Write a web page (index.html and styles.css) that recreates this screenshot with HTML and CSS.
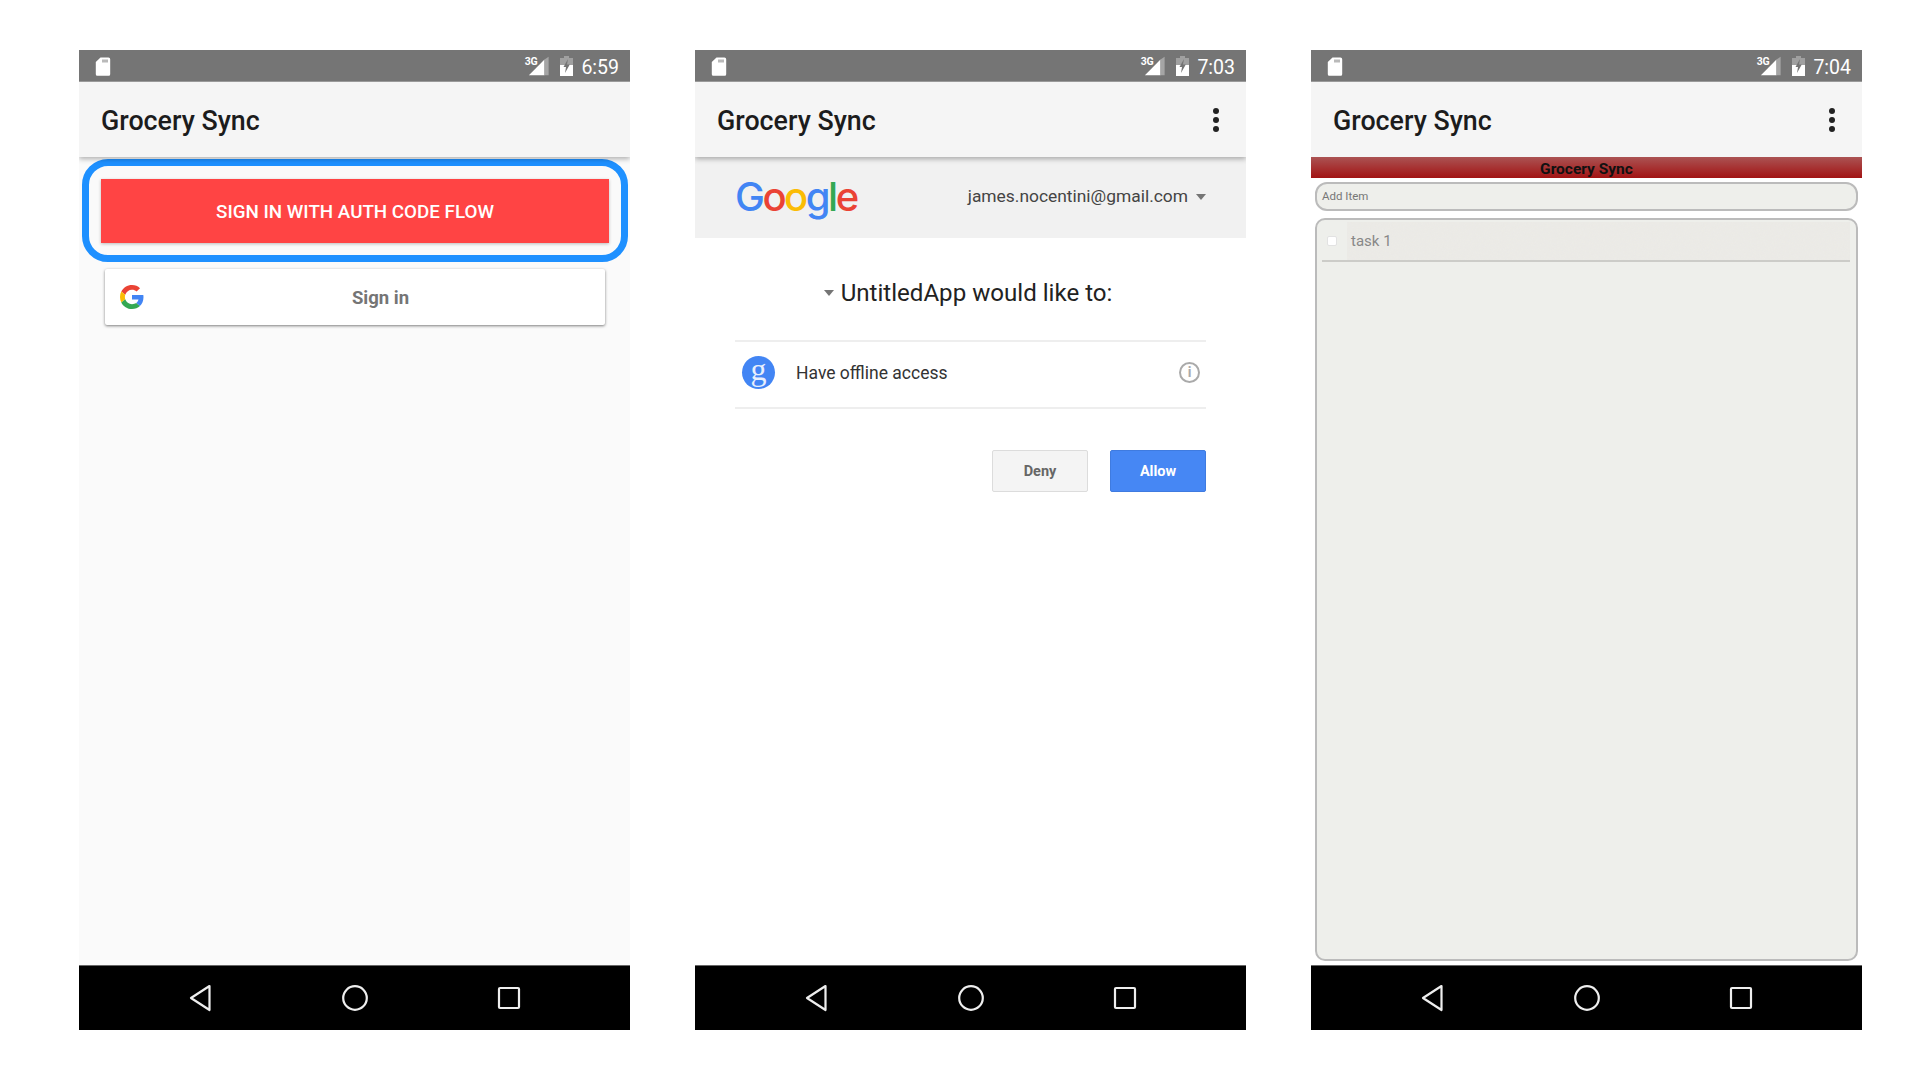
FILE: index.html
```html
<!DOCTYPE html>
<html lang="en">
<head>
  <meta charset="UTF-8" />
  <title>Grocery Sync screenshots</title>
  <link rel="stylesheet" href="styles.css">
</head>
<body>
  <svg class="defs" width="0" height="0">
    <symbol id="sd" viewBox="0 0 15 19">
      <path d="M5 0.5h8a1.7 1.7 0 0 1 1.7 1.7v15a1.5 1.500 0 0 1-1.500 1.500H1.800a1.500 1.500 0 0 1-1.500-1.500V5z" fill="#fff"/>
      <path d="M7 2.500h1v3H7zM9 2.500h1v3H9zM11 2.500h1v3h-1z" fill="#757575"/>
    </symbol>
    <symbol id="signal" viewBox="0 0 24 20">
      <path d="M1 20 L18 3 V20z" fill="#fff"/>
      <path d="M18 3 L22.500 0 V20 H18z" fill="#a5a5a5"/>
    </symbol>
    <symbol id="battery" viewBox="0 0 13 20">
      <path d="M4 0h5v2h4v18H0V2h4z" fill="#a0a0a0"/>
      <path d="M0 9h13v11H0z" fill="#fff"/>
      <path d="M8 3 3.500 11H6l-1 6 4.800-8.500H7z" fill="#757575"/>
    </symbol>
    <symbol id="back" viewBox="0 0 24 28">
      <path d="M21.500 2 3 14l18.500 12z" fill="none" stroke="#eee" stroke-width="2.200" stroke-linejoin="round"/>
    </symbol>
    <symbol id="home" viewBox="0 0 28 28">
      <circle cx="14" cy="14" r="11.800" fill="none" stroke="#eee" stroke-width="2.200"/>
    </symbol>
    <symbol id="recent" viewBox="0 0 24 24">
      <rect x="2" y="2" width="20" height="20" rx="1" fill="none" stroke="#eee" stroke-width="2.200"/>
    </symbol>
  </svg>

  <main class="gallery">

    <section class="phone">
      <div class="status-bar">
        <svg class="icon-sd"><use href="#sd"/></svg>
        <div class="status-right">
          <span class="net">3G</span>
          <svg class="icon-signal"><use href="#signal"/></svg>
          <svg class="icon-battery"><use href="#battery"/></svg>
          <span class="clock">6:59</span>
        </div>
      </div>
      <header class="app-bar">
        <h1>Grocery Sync</h1>
      </header>
      <div class="content signin">
        <div class="highlight">
          <button class="auth-btn">SIGN IN WITH AUTH CODE FLOW</button>
        </div>
        <button class="google-btn">
          <svg class="g-icon" viewBox="0 0 48 48">
            <path fill="#EA4335" d="M24 9.500c3.540 0 6.710 1.220 9.210 3.600l6.850-6.850C35.900 2.380 30.470 0 24 0 14.620 0 6.510 5.380 2.560 13.220l7.980 6.190C12.430 13.720 17.740 9.500 24 9.500z"/>
            <path fill="#4285F4" d="M46.980 24.550c0-1.570-.15-3.090-.38-4.550H24v9.020h12.940c-.58 2.960-2.260 5.480-4.780 7.180l7.730 6c4.510-4.180 7.090-10.360 7.090-17.650z"/>
            <path fill="#FBBC05" d="M10.530 28.590c-.48-1.450-.76-2.990-.76-4.590s.27-3.140.76-4.590l-7.980-6.190C.92 16.460 0 20.120 0 24c0 3.880.92 7.540 2.560 10.780l7.970-6.190z"/>
            <path fill="#34A853" d="M24 48c6.480 0 11.930-2.130 15.890-5.810l-7.730-6c-2.150 1.450-4.920 2.300-8.160 2.300-6.260 0-11.570-4.220-13.470-9.910l-7.980 6.190C6.510 42.620 14.620 48 24 48z"/>
          </svg>
          <span class="google-label">Sign in</span>
        </button>
      </div>
      <nav class="nav-bar">
        <svg class="icon-back"><use href="#back"/></svg>
        <svg class="icon-home"><use href="#home"/></svg>
        <svg class="icon-recent"><use href="#recent"/></svg>
      </nav>
    </section>

    <section class="phone">
      <div class="status-bar">
        <svg class="icon-sd"><use href="#sd"/></svg>
        <div class="status-right">
          <span class="net">3G</span>
          <svg class="icon-signal"><use href="#signal"/></svg>
          <svg class="icon-battery"><use href="#battery"/></svg>
          <span class="clock">7:03</span>
        </div>
      </div>
      <header class="app-bar">
        <h1>Grocery Sync</h1>
        <div class="overflow"><i></i><i></i><i></i></div>
      </header>
      <div class="content consent">
        <div class="account-row">
          <div class="google-word"><span class="c-blue">G</span><span class="c-red">o</span><span class="c-yellow">o</span><span class="c-blue">g</span><span class="c-green">l</span><span class="c-red">e</span></div>
          <div class="account">james.nocentini@gmail.com<span class="caret"></span></div>
        </div>
        <h2 class="consent-title"><span class="caret"></span>UntitledApp would like to:</h2>
        <div class="scope">
          <div class="scope-badge">g</div>
          <div class="scope-text">Have offline access</div>
          <div class="scope-info">i</div>
        </div>
        <div class="consent-actions">
          <button class="deny">Deny</button>
          <button class="allow">Allow</button>
        </div>
      </div>
      <nav class="nav-bar">
        <svg class="icon-back"><use href="#back"/></svg>
        <svg class="icon-home"><use href="#home"/></svg>
        <svg class="icon-recent"><use href="#recent"/></svg>
      </nav>
    </section>

    <section class="phone">
      <div class="status-bar">
        <svg class="icon-sd"><use href="#sd"/></svg>
        <div class="status-right">
          <span class="net">3G</span>
          <svg class="icon-signal"><use href="#signal"/></svg>
          <svg class="icon-battery"><use href="#battery"/></svg>
          <span class="clock">7:04</span>
        </div>
      </div>
      <header class="app-bar flat">
        <h1>Grocery Sync</h1>
        <div class="overflow"><i></i><i></i><i></i></div>
      </header>
      <div class="content tasks">
        <div class="tasks-title">Grocery Sync</div>
        <div class="add-item">Add Item</div>
        <div class="task-panel">
          <div class="task-row">
            <span class="task-check"></span>
            <span class="task-name">task 1</span>
          </div>
        </div>
      </div>
      <nav class="nav-bar">
        <svg class="icon-back"><use href="#back"/></svg>
        <svg class="icon-home"><use href="#home"/></svg>
        <svg class="icon-recent"><use href="#recent"/></svg>
      </nav>
    </section>

  </main>
</body>
</html>
```

FILE: styles.css
```css
* {
  box-sizing: border-box;
}

body {
  margin: 0;
  background-color: white;
  font-family: Roboto, "Liberation Sans", sans-serif;
}

.defs {
  position: absolute;
}

.gallery {
  display: flex;
  gap: 65px;
  padding: 50px 0 0 79px;
}

.phone {
  width: 551px;
  height: 980px;
  display: flex;
  flex-direction: column;
}

/* status bar */
.status-bar {
  height: 32px;
  background-color: #757575;
  border-bottom: 1px solid #9a9a9a;
  display: flex;
  justify-content: space-between;
  align-items: center;
  padding: 1px 11px 0 16px;
  flex: none;
}

.icon-sd {
  width: 16px;
  height: 19px;
}

.status-right {
  display: flex;
  align-items: center;
  color: white;
}

.net {
  font-size: 10.500px;
  font-weight: 700;
  margin: -10px -9px 0 0;
  letter-spacing: -0.3px;
}

.icon-signal {
  width: 22px;
  height: 20px;
  margin-right: 10px;
}

.icon-battery {
  width: 13px;
  height: 20px;
  margin-right: 8px;
}

.clock {
  font-size: 19.500px;
  margin-top: 2px;
}

/* app bar */
.app-bar {
  height: 75px;
  background-color: #f5f5f5;
  display: flex;
  justify-content: space-between;
  align-items: center;
  padding: 1px 22px 0;
  flex: none;
  position: relative;
  box-shadow: 0 2px 5px rgba(0,0,0,0.3);
  clip-path: inset(0 0 -12px 0);
}

.app-bar.flat {
  box-shadow: none;
}

.app-bar h1 {
  margin: 2px 0 0;
  font-size: 26.800px;
  font-weight: 500;
  color: #1c1c1c;
}

.overflow {
  display: flex;
  flex-direction: column;
  gap: 3px;
  margin: -1px 5px 0 0;
}

.overflow i {
  display: block;
  width: 6px;
  height: 6px;
  border-radius: 50%;
  background-color: #222;
}

.content {
  flex: 1;
  min-height: 0;
}

/* first phone */
.signin {
  background-color: #fafafa;
  padding: 2px 3px 0;
}

.highlight {
  width: 546px;
  height: 103px;
  border: 7px solid #1e90ff;
  border-radius: 26px;
  padding: 13px 12px;
}

.auth-btn {
  width: 100%;
  height: 64px;
  border: none;
  padding: 2px 0 0;
  background-color: #ff4444;
  color: white;
  font-family: inherit;
  font-size: 18.800px;
  font-weight: 500;
  box-shadow: 0 1px 3px rgba(0,0,0,0.25);
}

.google-btn {
  width: 500px;
  height: 56px;
  margin: 7px 0 0 23px;
  border: none;
  border-radius: 2px;
  background-color: white;
  box-shadow: 0 1px 3px rgba(0,0,0,0.5);
  display: flex;
  align-items: center;
  padding: 0 0 0 15px;
  font-family: inherit;
}

.g-icon {
  width: 24px;
  height: 24px;
  flex: none;
}

.google-label {
  flex: 1;
  text-align: center;
  font-size: 18.500px;
  font-weight: 700;
  color: #757575;
  padding: 2px 0 0 12px;
}

/* second phone */
.consent {
  background-color: white;
}

.account-row {
  height: 81px;
  background-color: #f1f1f1;
  display: flex;
  justify-content: space-between;
  align-items: center;
  padding: 0 40px;
}

.google-word {
  font-family: Inter, sans-serif;
  font-size: 40px;
  font-weight: 500;
  letter-spacing: -2.500px;
  line-height: 1;
  margin-top: -2px;
}

.c-blue { color: #4285f4; }
.c-red { color: #ea4335; }
.c-yellow { color: #fbbc05; }
.c-green { color: #34a853; }

.account {
  font-size: 17.400px;
  color: #444;
  display: flex;
  align-items: center;
  margin-top: -4px;
}

.caret {
  display: inline-block;
  border: 5.500px solid transparent;
  border-top: 6px solid #757575;
  border-bottom: 0;
}

.account .caret {
  margin-left: 8px;
  margin-top: 3px;
}

.consent-title {
  margin: 0;
  height: 102px;
  padding: 8px 5px 0 0;
  display: flex;
  justify-content: center;
  align-items: center;
  font-size: 24.100px;
  font-weight: 400;
  color: #222;
}

.consent-title .caret {
  margin-right: 7px;
}

.scope {
  height: 69px;
  margin: 0 40px;
  border-top: 2px solid #eee;
  border-bottom: 2px solid #eee;
  display: flex;
  align-items: center;
  padding: 0 6px 4px 7px;
}

.scope-badge {
  width: 33px;
  height: 33px;
  border-radius: 50%;
  background-color: #4285f4;
  color: #e8effc;
  font-family: "Liberation Serif", serif;
  font-size: 32px;
  line-height: 26px;
  text-align: center;
  flex: none;
}

.scope-text {
  flex: 1;
  margin-left: 21px;
  font-size: 17.500px;
  color: #333;
}

.scope-info {
  width: 21px;
  height: 21px;
  border: 2px solid #aaa;
  border-radius: 50%;
  color: #aaa;
  font-size: 14px;
  font-weight: 700;
  line-height: 17px;
  text-align: center;
}

.consent-actions {
  display: flex;
  justify-content: flex-end;
  gap: 22px;
  margin: 41px 40px 0;
}

.consent-actions button {
  width: 96px;
  height: 42px;
  border-radius: 2px;
  font-family: inherit;
  font-size: 14.500px;
  font-weight: 700;
}

.deny {
  background-color: #f4f4f4;
  border: 1px solid #dcdcdc;
  color: #666;
}

.allow {
  background-color: #4687f4;
  border: 1px solid #3f7be0;
  color: white;
}

/* third phone */
.tasks {
  background-color: white;
  padding-bottom: 4px;
  display: flex;
  flex-direction: column;
}

.tasks-title {
  height: 21px;
  flex: none;
  background: linear-gradient(#ab5353, #a21313);
  font-size: 15.500px;
  font-weight: 700;
  line-height: 24px;
  text-align: center;
  color: #111;
  margin-bottom: 4px;
  overflow: hidden;
}

.add-item {
  height: 29px;
  flex: none;
  margin: 0 4px 0;
  padding-left: 5px;
  background-color: #eeefeb;
  border: 2px solid #bbb;
  border-radius: 12px;
  font-size: 11.500px;
  line-height: 25px;
  color: #777;
}

.task-panel {
  flex: 1;
  margin: 7px 4px 0;
  padding: 2px 6px 0 5px;
  background-color: #eeefeb;
  border: 2px solid #bbb;
  border-radius: 10px;
}

.task-row {
  height: 40px;
  display: flex;
  align-items: center;
  border-bottom: 2px solid #ccccc8;
  background:
    linear-gradient(90deg, #eeefeb 25px, transparent 25px),
    url("data:image/svg+xml,%3Csvg xmlns='http://www.w3.org/2000/svg' width='200' height='60'%3E%3Cfilter id='n'%3E%3CfeTurbulence type='fractalNoise' baseFrequency='0.6' numOctaves='2'/%3E%3CfeColorMatrix values='0 0 0 0 0.75 0 0 0 0 0.74 0 0 0 0 0.7 0 0 0 0.14 0'/%3E%3C/filter%3E%3Crect width='200' height='60' filter='url(%23n)'/%3E%3C/svg%3E"),
    #ecebe7;
}

.task-check {
  width: 10px;
  height: 10px;
  margin-left: 5px;
  background-color: white;
  border: 1px solid #e2e2e2;
  border-radius: 2px;
}

.task-name {
  margin-left: 14px;
  font-size: 15px;
  color: #888;
}

/* nav bar */
.nav-bar {
  height: 65px;
  background-color: black;
  border-top: 1px solid #666;
  display: flex;
  justify-content: space-between;
  align-items: center;
  padding: 0 109px;
  flex: none;
}

.icon-back {
  width: 24px;
  height: 28px;
}

.icon-home {
  width: 28px;
  height: 28px;
}

.icon-recent {
  width: 24px;
  height: 24px;
}
```
